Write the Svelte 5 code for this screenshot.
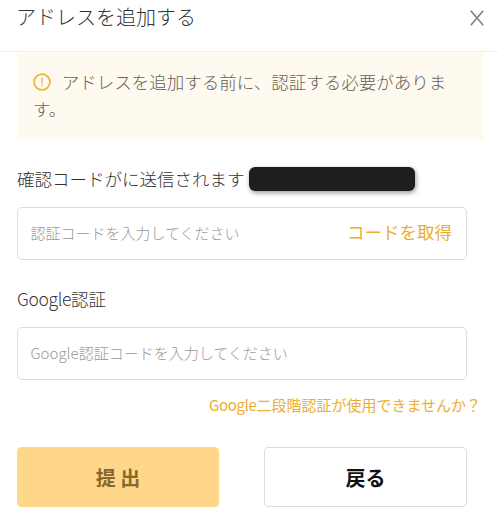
<script lang="ts">
	let code = $state('');
	let googleCode = $state('');
</script>

<main class="dialog">
	<header class="dialog-header">
		<h1>アドレスを追加する</h1>
		<button type="button" class="close" aria-label="閉じる">
			<svg width="14" height="16" viewBox="0 0 14 16">
				<path d="M0.8 0.8 13.2 15.2M13.2 0.8 0.8 15.2" />
			</svg>
		</button>
	</header>

	<div class="notice">
		<svg width="18" height="18" viewBox="0 0 18 18">
			<circle cx="9" cy="9" r="7.9" />
			<path class="mark" d="M9 4.6v5.8M9 11.8v1.5" />
		</svg>
		アドレスを追加する前に、認証する必要があります。
	</div>

	<form onsubmit={(event) => event.preventDefault()}>
		<label class="label" for="code">確認コードがに送信されます<span class="redacted"></span></label>
		<div class="field">
			<input id="code" placeholder="認証コードを入力してください" bind:value={code} />
			<button type="button" class="get-code">コードを取得</button>
		</div>

		<label class="label second" for="google"><span class="latin">Google</span>認証</label>
		<div class="field">
			<input id="google" placeholder="Google認証コードを入力してください" bind:value={googleCode} />
		</div>

		<a class="help" href="#help"><span class="latin">Google</span>二段階認証が使用できませんか？</a>

		<div class="actions">
			<button type="submit" class="btn primary">提 出</button>
			<button type="button" class="btn">戻る</button>
		</div>
	</form>
</main>

<style>
	:global(body) {
		background: #fff;
		overflow: hidden;
	}

	.dialog {
		box-sizing: border-box;
		width: 498px;
		height: 516px;
		color: #333;
		font-family: 'Noto Sans CJK JP', sans-serif;
		font-size: 17.5px;
		font-weight: 300;
	}

	button,
	input {
		padding: 0;
		border: 0;
		background: none;
		font: inherit;
	}

	button {
		cursor: pointer;
	}

	.dialog-header {
		display: flex;
		justify-content: space-between;
		box-sizing: border-box;
		height: 52px;
		padding: 2px 14px 0 16px;
		border-bottom: 1px solid #eee;
	}

	h1 {
		margin: 0;
		font-size: 20px;
		font-weight: 300;
		line-height: 29px;
	}

	.close {
		display: flex;
		align-self: flex-start;
		margin-top: 8px;
	}

	.close svg {
		stroke: #808080;
		stroke-width: 1.6;
	}

	.notice {
		box-sizing: border-box;
		height: 88px;
		margin: 0 15px 0 17px;
		padding: 16px 16px 0;
		background: #fffaef;
		color: #66625b;
		line-height: 27px;
	}

	.notice svg {
		margin-right: 7px;
		vertical-align: -2px;
		fill: none;
		stroke: #ebb332;
		stroke-width: 1.7;
	}

	.notice .mark {
		stroke-width: 1.3;
	}

	form {
		display: flex;
		flex-direction: column;
		padding: 25px 31px 0 17px;
	}

	.label {
		display: flex;
		align-items: center;
		height: 26px;
		margin-bottom: 16px;
	}

	.label.second {
		margin-top: 25px;
	}

	.redacted {
		width: 166px;
		height: 24px;
		margin: 2px 0 0 4px;
		border-radius: 6px;
		background: #1e1e1e;
		box-shadow: 1px 2px 5px rgba(0, 0, 0, 0.4);
	}

	.field {
		display: flex;
		align-items: center;
		box-sizing: border-box;
		height: 53px;
		padding: 0 14px 2px 12.5px;
		border: 1px solid #dcdcdc;
		border-radius: 5px;
	}

	input {
		flex: 1;
		min-width: 0;
		color: #333;
		font-size: 15px;
		outline: none;
	}

	input::placeholder {
		color: #999;
		opacity: 1;
	}

	.get-code {
		padding-bottom: 3px;
		color: #ebae2e;
		font-weight: 400;
	}

	.help {
		align-self: flex-end;
		margin: 13px -14px 0 0;
		color: #ebae2e;
		font-size: 15px;
		font-weight: 400;
		line-height: 24px;
		text-decoration: none;
		white-space: nowrap;
	}

	.latin {
		letter-spacing: -0.35px;
	}

	.actions {
		display: flex;
		justify-content: space-between;
		margin-top: 30px;
	}

	.btn {
		box-sizing: border-box;
		width: 203px;
		height: 60px;
		border: 1px solid #dcdcdc;
		border-radius: 4px;
		color: #111;
		font-size: 20px;
		font-weight: 700;
	}

	.primary {
		width: 202px;
		border-color: #ffd78a;
		background: #ffd78a;
		color: #87682c;
	}
</style>
